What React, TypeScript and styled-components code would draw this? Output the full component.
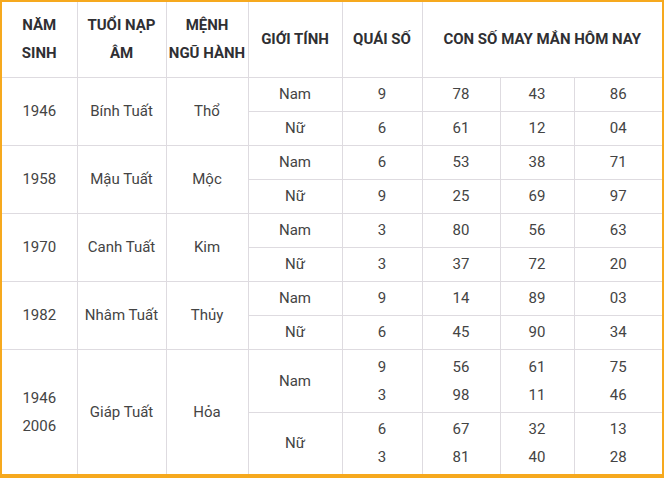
import React from "react";
import styled, { createGlobalStyle } from "styled-components";

type Group = {
  years: string[];
  tuoi: string;
  menh: string;
  nam: { quai: string[]; nums: string[][] };
  nu: { quai: string[]; nums: string[][] };
  h: number[];
};

const groups: Group[] = [
  {
    years: ["1946"],
    tuoi: "Bính Tuất",
    menh: "Thổ",
    nam: { quai: ["9"], nums: [["78"], ["43"], ["86"]] },
    nu: { quai: ["6"], nums: [["61"], ["12"], ["04"]] },
    h: [34, 34],
  },
  {
    years: ["1958"],
    tuoi: "Mậu Tuất",
    menh: "Mộc",
    nam: { quai: ["6"], nums: [["53"], ["38"], ["71"]] },
    nu: { quai: ["9"], nums: [["25"], ["69"], ["97"]] },
    h: [34, 34],
  },
  {
    years: ["1970"],
    tuoi: "Canh Tuất",
    menh: "Kim",
    nam: { quai: ["3"], nums: [["80"], ["56"], ["63"]] },
    nu: { quai: ["3"], nums: [["37"], ["72"], ["20"]] },
    h: [34, 34],
  },
  {
    years: ["1982"],
    tuoi: "Nhâm Tuất",
    menh: "Thủy",
    nam: { quai: ["9"], nums: [["14"], ["89"], ["03"]] },
    nu: { quai: ["6"], nums: [["45"], ["90"], ["34"]] },
    h: [34, 34],
  },
  {
    years: ["1946", "2006"],
    tuoi: "Giáp Tuất",
    menh: "Hỏa",
    nam: { quai: ["9", "3"], nums: [["56", "98"], ["61", "11"], ["75", "46"]] },
    nu: { quai: ["6", "3"], nums: [["67", "81"], ["32", "40"], ["13", "28"]] },
    h: [63, 62],
  },
];

const widths = [75, 89, 82, 94, 80, 78, 74, 88];

const GlobalStyle = createGlobalStyle`
  html, body {
    margin: 0;
    padding: 0;
    background: #ffffff;
  }
  body {
    font-family: Roboto, "Liberation Sans", sans-serif;
  }
`;

const Frame = styled.div`
  width: 664px;
  height: 478px;
  box-sizing: border-box;
  border: 2px solid #f6a91e;
  border-bottom-width: 4px;
  background: #ffffff;
  overflow: hidden;
`;

const Table = styled.table`
  width: 660px;
  table-layout: fixed;
  border-collapse: collapse;
  border-style: hidden;
  font-size: 15px;
  color: #444444;
`;

const Row = styled.tr<{ $h: number }>`
  height: ${({ $h }) => $h}px;
`;

const HeadCell = styled.th`
  border: 1px solid #dedbe0;
  padding: 0;
  font-weight: 700;
  font-size: 15px;
  line-height: 28px;
  color: #2f2f33;
  text-align: center;
  vertical-align: middle;
  white-space: nowrap;
`;

const Cell = styled.td`
  border: 1px solid #dedbe0;
  padding: 0;
  line-height: 28px;
  text-align: center;
  vertical-align: middle;
  white-space: nowrap;
`;

const Line = styled.div`
  line-height: 28px;
`;

const Lines = ({ items }: { items: string[] }) => (
  <>
    {items.map((t, i) => (
      <Line key={i}>{t}</Line>
    ))}
  </>
);

export default function App() {
  return (
    <>
      <GlobalStyle />
      <Frame>
        <Table>
          <colgroup>
            {widths.map((w, i) => (
              <col key={i} style={{ width: w }} />
            ))}
          </colgroup>
          <thead>
            <Row $h={75}>
              <HeadCell>
                NĂM
                <br />
                SINH
              </HeadCell>
              <HeadCell>
                TUỔI NẠP
                <br />
                ÂM
              </HeadCell>
              <HeadCell>
                MỆNH
                <br />
                NGŨ HÀNH
              </HeadCell>
              <HeadCell>GIỚI TÍNH</HeadCell>
              <HeadCell>QUÁI SỐ</HeadCell>
              <HeadCell colSpan={3}>CON SỐ MAY MẮN HÔM NAY</HeadCell>
            </Row>
          </thead>
          <tbody>
            {groups.map((g, gi) => (
              <React.Fragment key={gi}>
                <Row $h={g.h[0]}>
                  <Cell rowSpan={2}>
                    <Lines items={g.years} />
                  </Cell>
                  <Cell rowSpan={2}>{g.tuoi}</Cell>
                  <Cell rowSpan={2}>{g.menh}</Cell>
                  <Cell>Nam</Cell>
                  <Cell>
                    <Lines items={g.nam.quai} />
                  </Cell>
                  {g.nam.nums.map((n, i) => (
                    <Cell key={i}>
                      <Lines items={n} />
                    </Cell>
                  ))}
                </Row>
                <Row $h={g.h[1]}>
                  <Cell>Nữ</Cell>
                  <Cell>
                    <Lines items={g.nu.quai} />
                  </Cell>
                  {g.nu.nums.map((n, i) => (
                    <Cell key={i}>
                      <Lines items={n} />
                    </Cell>
                  ))}
                </Row>
              </React.Fragment>
            ))}
          </tbody>
        </Table>
      </Frame>
    </>
  );
}
